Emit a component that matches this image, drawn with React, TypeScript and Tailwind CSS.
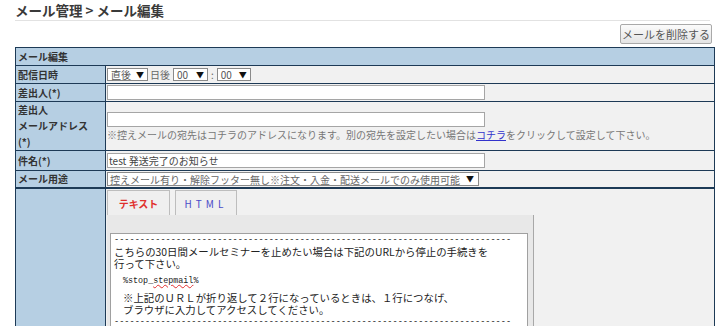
const jp = "font-['Noto_Sans_CJK_JP','Noto_Sans',sans-serif]";

function Row({
  label,
  h,
  children,
  top = true,
  thick = false,
}: {
  label: React.ReactNode;
  h: string;
  children?: React.ReactNode;
  top?: boolean;
  thick?: boolean;
}) {
  return (
    <div
      className={`flex ${h} ${top ? (thick ? "border-t-2" : "border-t") : ""} border-[#1d3a56]`}
    >
      <div className="w-[90px] shrink-0 border-r border-[#1d3a56] bg-[#b6cfe3] pl-[2px] flex items-center text-[10px] leading-[16px] font-bold text-[#333]">
        {label}
      </div>
      <div className="flex-1 bg-[#f1f1f1] pl-[1px] flex items-center min-w-0">{children}</div>
    </div>
  );
}

function Sel({ text, w }: { text: string; w: string }) {
  return (
    <span
      className={`${w} h-[13px] border border-[#8a8a8a] bg-white flex items-center justify-between pl-[3px] pr-[3px] text-[10px] leading-[11px] text-[#555]`}
    >
      <span>{text}</span>
      <span className="text-[8px] text-[#111]">▼</span>
    </span>
  );
}

export default function App() {
  const dashes = "-".repeat(77);
  return (
    <div className={`w-[725px] h-[326px] overflow-hidden bg-white ${jp}`}>
      <div className="pl-[15px]">
        <h1 className="w-[695px] border-b border-[#e2e2e2] pt-[1px] pb-[1px] text-[13.5px] leading-[18px] font-bold text-[#3a3a3a]">
          メール管理 &gt; メール編集
        </h1>

        <div className="w-[700px] flex justify-end pr-[3px] mt-[3px]">
          <button className="h-[20px] w-[92px] border border-[#a9a9a9] rounded-[2px] bg-gradient-to-b from-[#fbfbfb] to-[#e4e4e4] text-[11px] leading-[18px] text-[#555]">
            メールを削除する
          </button>
        </div>

        <div className="w-[700px] mt-[3px] border border-[#1d3a56] text-[#333]">
          <div className="h-[17px] bg-[#b6cfe3] pl-[2px] flex items-center text-[10px] font-bold">メール編集</div>

          <Row label="配信日時" h="h-[18px]">
            <div className="flex items-center text-[10px] text-[#666]">
              <Sel text="直後" w="w-[41px]" />
              <span className="ml-[2px] mr-[3px]">日後</span>
              <Sel text="00" w="w-[35px]" />
              <span className="mx-[3px]">:</span>
              <Sel text="00" w="w-[34px]" />
            </div>
          </Row>

          <Row label="差出人(*)" h="h-[18px]">
            <div className="w-[378px] h-[15px] border border-[#a5a5a5] bg-white" />
          </Row>

          <Row
            label={
              <span>
                差出人
                <br />
                メールアドレス
                <br />
                (*)
              </span>
            }
            h="h-[49px]"
          >
            <div className="flex flex-col">
              <div className="w-[378px] h-[15px] border border-[#a5a5a5] bg-white" />
              <p className="text-[10px] leading-[13px] text-[#777] whitespace-nowrap mt-[1px]">
                ※控えメールの宛先はコチラのアドレスになります。別の宛先を設定したい場合は
                <span className="text-[#3333cc] underline">コチラ</span>
                をクリックして設定して下さい。
              </p>
            </div>
          </Row>

          <Row label="件名(*)" h="h-[20px]">
            <div className="w-[378px] h-[15px] border border-[#a5a5a5] bg-white flex items-center pl-[1px] text-[10px] text-[#444]">
              test 発送完了のお知らせ
            </div>
          </Row>

          <Row label="メール用途" h="h-[17px]">
            <span className="w-[372px] h-[14px] border border-[#8a8a8a] bg-white flex items-center justify-between pl-[2px] pr-[4px] text-[10px] text-[#666] whitespace-nowrap">
              <span>控えメール有り・解除フッター無し※注文・入金・配送メールでのみ使用可能</span>
              <span className="text-[8px] text-[#111]">▼</span>
            </span>
          </Row>

          <div className="flex h-[160px] border-t-2 border-[#1d3a56]">
            <div className="w-[90px] shrink-0 border-r border-[#1d3a56] bg-[#b6cfe3]" />
            <div className="flex-1 bg-[#f1f1f1] pl-[1px] pt-[1px]">
              <div className="flex gap-[5px] h-[25px]">
                <div className="w-[63px] border border-b-0 border-[#bdbdbd] bg-[#efefef] flex items-center justify-center text-[10px] font-bold text-[#e0302c]">
                  テキスト
                </div>
                <div className="w-[62px] border border-b-0 border-[#bdbdbd] bg-[#efefef] flex items-center justify-center text-[10px] tracking-[4px] text-[#4b4bc8]">
                  HTML
                </div>
              </div>
              <div className="w-[427px] h-[140px] bg-[#e8e8e8] border-r border-[#a8a8a8] pt-[18px] pl-[3px]">
                <div className="w-[418px] h-[120px] border border-[#a0a0a0] bg-white pl-[3px] text-[10.4px] leading-[12px] text-[#222] overflow-hidden">
                  <div className="font-['Liberation_Mono',monospace] text-[8.6px] whitespace-nowrap">{dashes}</div>
                  <div className="whitespace-nowrap">こちらの30日間メールセミナーを止めたい場合は下記のURLから停止の手続きを</div>
                  <div className="whitespace-nowrap">行って下さい。</div>
                  <div className="h-[5px]" />
                  <div className="pl-[9px] font-['Liberation_Mono',monospace] text-[8.4px]">
                    %stop_<span className="underline decoration-wavy decoration-[#e03030]">stepmail</span>%
                  </div>
                  <div className="h-[5px]" />
                  <div className="pl-[9px] whitespace-nowrap">※上記のＵＲＬが折り返して２行になっているときは、１行につなげ、</div>
                  <div className="pl-[9px] whitespace-nowrap">ブラウザに入力してアクセスしてください。</div>
                  <div className="font-['Liberation_Mono',monospace] text-[8.6px] whitespace-nowrap">{dashes}</div>
                </div>
              </div>
            </div>
          </div>
        </div>
      </div>
    </div>
  );
}
